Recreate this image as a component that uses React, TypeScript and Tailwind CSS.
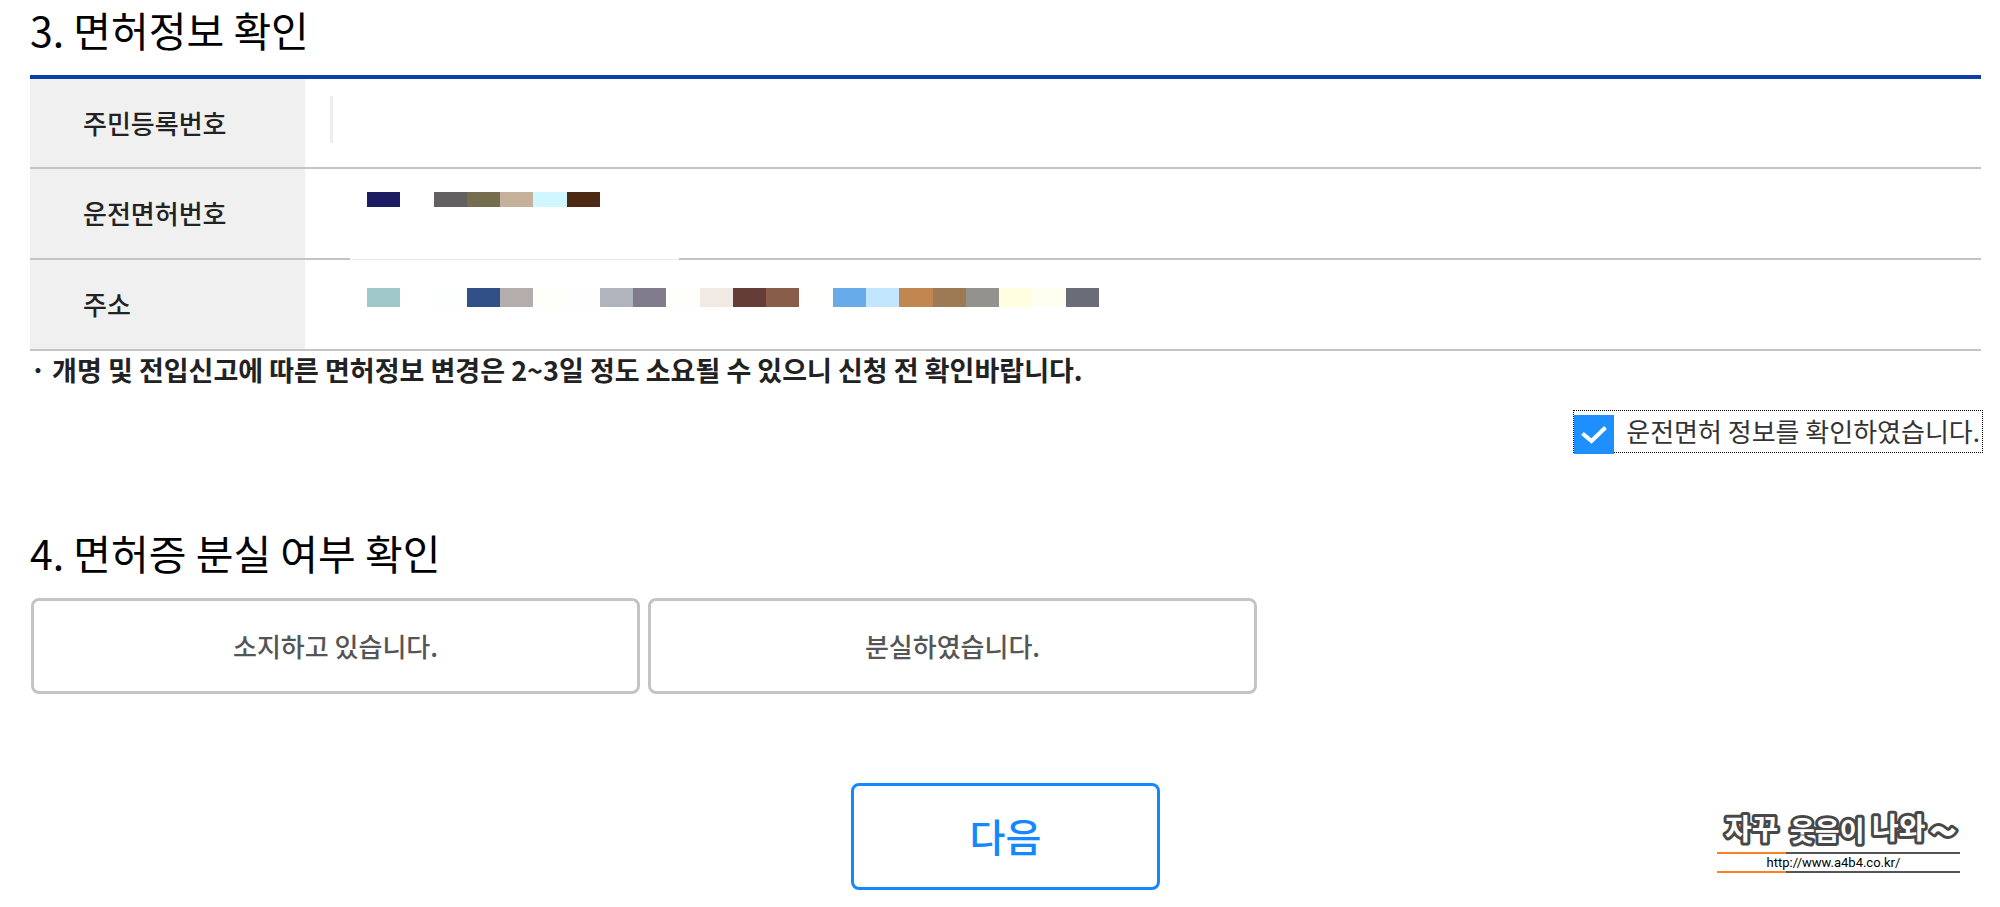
import { useState } from 'react'

type MosaicProps = {
    cells: string[]
    className: string
}

const LICENSE_CELLS = [
    'bg-[#1c1c62]', 'bg-white', 'bg-[#626061]', 'bg-[#766d4f]', 'bg-[#c5b09c]', 'bg-[#d0f6ff]', 'bg-[#4d2812]',
]

const ADDRESS_CELLS = [
    'bg-[#a0c8c9]', 'bg-[#fefffe]', 'bg-[#fdfffe]', 'bg-[#305087]', 'bg-[#b3aeac]', 'bg-[#fffffa]', 'bg-[#fefefe]',
    'bg-[#b0b4bd]', 'bg-[#817c8c]', 'bg-[#fefffb]', 'bg-[#f1e9e3]', 'bg-[#643e36]', 'bg-[#885d49]', 'bg-[#fffffd]',
    'bg-[#67abe8]', 'bg-[#c3e6ff]', 'bg-[#c08850]', 'bg-[#9d7a53]', 'bg-[#94928d]', 'bg-[#fffee1]', 'bg-[#fefff1]',
    'bg-[#6a6d78]',
]

function Mosaic({ cells, className }: MosaicProps) {
    return (
        <div className={`flex ${className}`}>
            {cells.map((cell, i) => (
                <span key={i} className={`flex-1 ${cell}`} />
            ))}
        </div>
    )
}

function WatermarkRule() {
    return (
        <div className="flex h-[2px]">
            <span className="w-[69px] bg-[#ff7f27]" />
            <span className="flex-1 bg-[#555]" />
        </div>
    )
}

function Watermark() {
    return (
        <div className="absolute right-[40px] bottom-[34px] w-[243px]">
            <svg viewBox="0 0 243 46" className="block h-[46px] w-full overflow-visible">
                <g
                    fill="#fff"
                    stroke="#484848"
                    strokeWidth="6"
                    strokeLinejoin="round"
                    paintOrder="stroke"
                    fontWeight="700"
                >
                    <text x="8" y="34" fontSize="29">자꾸</text>
                    <text x="73" y="35" fontSize="27">웃음이</text>
                    <text x="155" y="33" fontSize="29">나와</text>
                    <text x="212" y="43" fontSize="48">~</text>
                </g>
            </svg>
            <WatermarkRule />
            <a
                href="http://www.a4b4.co.kr/"
                className="block h-[17px] pr-[10px] text-center font-['Roboto',sans-serif] text-[13px] leading-[17px] text-black"
            >
                http://www.a4b4.co.kr/
            </a>
            <WatermarkRule />
        </div>
    )
}

export default function App() {
    const [confirmed, setConfirmed] = useState(true)

    const headingClass = 'pb-[17px] text-[41px] leading-[58px] text-black'
    const thClass =
        'w-[275px] border-b-2 border-[#c4c4c4] bg-[#f0f0f0] pb-[2px] pl-[53px] text-left align-middle font-medium'
    const tdClass = 'relative border-b-2 border-[#c4c4c4] p-0 align-top'
    const choiceClass =
        'h-[96px] w-[609px] rounded-lg border-3 border-[#c4c4c4] bg-white pb-[2px] text-[26px] font-medium text-[#555]'

    return (
        <main className="relative min-h-screen bg-white pr-[19px] pl-[30px] font-['Noto_Sans_CJK_KR',sans-serif] text-[26px] text-[#222]">
            <section>
                <h2 className={headingClass}>3. 면허정보 확인</h2>
                <table className="w-full border-separate border-spacing-0 border-t-4 border-[#0a41a8]">
                    <tbody>
                        <tr className="h-[90px]">
                            <th scope="row" className={thClass}>
                                <label htmlFor="resident">주민등록번호</label>
                            </th>
                            <td className={tdClass}>
                                <input
                                    id="resident"
                                    type="text"
                                    className="mt-[17px] ml-[25px] block h-[47px] w-[600px] border-l-3 border-[#eee] pl-4 outline-none"
                                />
                            </td>
                        </tr>
                        <tr className="h-[91px]">
                            <th scope="row" className={thClass}>운전면허번호</th>
                            <td className={tdClass}>
                                <Mosaic cells={LICENSE_CELLS} className="mt-[23px] ml-[62px] h-[15px] w-[233px]" />
                                {/* blank patch hiding part of the row line */}
                                <span className="absolute -bottom-[2px] left-[45px] h-[2px] w-[329px] border-b border-[#eaeaea] bg-white" />
                            </td>
                        </tr>
                        <tr className="h-[91px]">
                            <th scope="row" className={thClass}>주소</th>
                            <td className={tdClass}>
                                <Mosaic cells={ADDRESS_CELLS} className="mt-[28px] ml-[62px] h-[19px] w-[732px]" />
                            </td>
                        </tr>
                    </tbody>
                </table>
                <p className="text-[27px] leading-[38px] font-bold">
                    · 개명 및 전입신고에 따른 면허정보 변경은 2~3일 정도 소요될 수 있으니 신청 전 확인바랍니다.
                </p>
                <div className="mt-[21px] flex justify-end">
                    <label className="-mr-[2px] flex h-[43px] items-center border border-dotted border-black pr-[2px] text-[#333]">
                        <span className="relative mt-[6px] mr-[12px] h-[39px] w-[40px]">
                            <input
                                type="checkbox"
                                checked={confirmed}
                                onChange={() => setConfirmed(!confirmed)}
                                className="block h-[39px] w-[40px] appearance-none border border-[#1e8fff] bg-white checked:bg-[#1e8fff]"
                            />
                            <svg viewBox="0 0 39 39" className="pointer-events-none absolute inset-0 h-full w-full">
                                <path d="M8 18.5L17 26L31 12.5" fill="none" stroke="#fff" strokeWidth="4" />
                            </svg>
                        </span>
                        <span className="pb-[2px]">운전면허 정보를 확인하였습니다.</span>
                    </label>
                </div>
            </section>

            <section className="mt-[70px]">
                <h2 className={headingClass}>4. 면허증 분실 여부 확인</h2>
                <div className="flex gap-2 pl-px">
                    <button type="button" className={choiceClass}>소지하고 있습니다.</button>
                    <button type="button" className={choiceClass}>분실하였습니다.</button>
                </div>
            </section>

            <div className="mt-[89px] flex justify-center">
                <button
                    type="button"
                    className="h-[107px] w-[309px] rounded-lg border-3 border-[#1388ff] bg-white pb-[2px] text-[39px] font-medium text-[#1388ff]"
                >
                    다음
                </button>
            </div>

            <Watermark />
        </main>
    )
}
